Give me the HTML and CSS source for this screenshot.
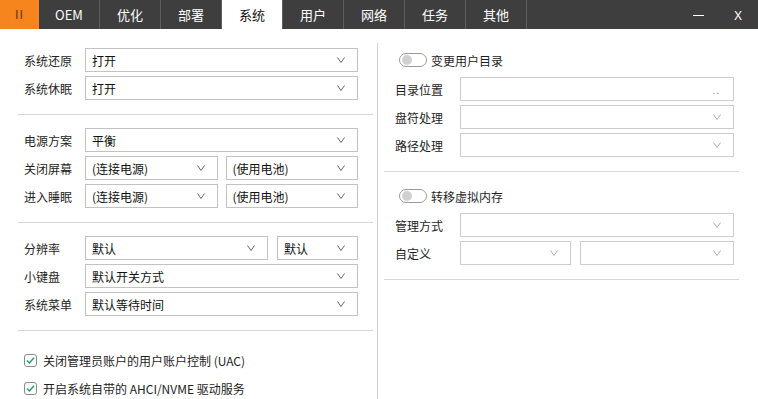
FILE: index.html
```html
<!DOCTYPE html>
<html lang="zh-CN">
<head>
    <meta charset="UTF-8">
    <title>系统</title>
    <link rel="stylesheet" href="styles.css">
</head>
<body>
    <!-- Top tab bar -->
    <div class="topbar">
        <div class="tab tab-logo">II</div>
        <div class="tab">OEM</div>
        <div class="tab">优化</div>
        <div class="tab">部署</div>
        <div class="tab active">系统</div>
        <div class="tab">用户</div>
        <div class="tab">网络</div>
        <div class="tab">任务</div>
        <div class="tab">其他</div>
        <div class="spacer"></div>
        <div class="win-btn"><span class="min-line"></span></div>
        <div class="win-btn">X</div>
    </div>

    <div class="main">
        <!-- Left column -->
        <div class="panel panel-left">
            <div class="section first">
                <div class="row">
                    <span class="label">系统还原</span>
                    <div class="select"><span>打开</span><svg class="chev" width="8" height="6" viewBox="0 0 8 6"><polyline points="0.5,0.5 4,5.5 7.5,0.5"/></svg></div>
                </div>
                <div class="row">
                    <span class="label">系统休眠</span>
                    <div class="select"><span>打开</span><svg class="chev" width="8" height="6" viewBox="0 0 8 6"><polyline points="0.5,0.5 4,5.5 7.5,0.5"/></svg></div>
                </div>
            </div>

            <div class="section">
                <div class="row">
                    <span class="label">电源方案</span>
                    <div class="select"><span>平衡</span><svg class="chev" width="8" height="6" viewBox="0 0 8 6"><polyline points="0.5,0.5 4,5.5 7.5,0.5"/></svg></div>
                </div>
                <div class="row">
                    <span class="label">关闭屏幕</span>
                    <div class="pair pair-power">
                        <div class="select"><span>(连接电源)</span><svg class="chev" width="8" height="6" viewBox="0 0 8 6"><polyline points="0.5,0.5 4,5.5 7.5,0.5"/></svg></div>
                        <div class="select"><span>(使用电池)</span><svg class="chev" width="8" height="6" viewBox="0 0 8 6"><polyline points="0.5,0.5 4,5.5 7.5,0.5"/></svg></div>
                    </div>
                </div>
                <div class="row">
                    <span class="label">进入睡眠</span>
                    <div class="pair pair-power">
                        <div class="select"><span>(连接电源)</span><svg class="chev" width="8" height="6" viewBox="0 0 8 6"><polyline points="0.5,0.5 4,5.5 7.5,0.5"/></svg></div>
                        <div class="select"><span>(使用电池)</span><svg class="chev" width="8" height="6" viewBox="0 0 8 6"><polyline points="0.5,0.5 4,5.5 7.5,0.5"/></svg></div>
                    </div>
                </div>
            </div>

            <div class="section">
                <div class="row">
                    <span class="label">分辨率</span>
                    <div class="pair pair-res">
                        <div class="select"><span>默认</span><svg class="chev" width="8" height="6" viewBox="0 0 8 6"><polyline points="0.5,0.5 4,5.5 7.5,0.5"/></svg></div>
                        <div class="select"><span>默认</span><svg class="chev" width="8" height="6" viewBox="0 0 8 6"><polyline points="0.5,0.5 4,5.5 7.5,0.5"/></svg></div>
                    </div>
                </div>
                <div class="row">
                    <span class="label">小键盘</span>
                    <div class="select"><span>默认开关方式</span><svg class="chev" width="8" height="6" viewBox="0 0 8 6"><polyline points="0.5,0.5 4,5.5 7.5,0.5"/></svg></div>
                </div>
                <div class="row">
                    <span class="label">系统菜单</span>
                    <div class="select"><span>默认等待时间</span><svg class="chev" width="8" height="6" viewBox="0 0 8 6"><polyline points="0.5,0.5 4,5.5 7.5,0.5"/></svg></div>
                </div>
            </div>

            <div class="section checks">
                <label class="check">
                    <svg class="checkbox" width="13" height="13" viewBox="0 0 13 13"><rect x="0.5" y="0.5" width="12" height="12" rx="2.5" class="cb-box"/><polyline points="3,6.6 5.4,9 10,3.8" class="cb-mark"/></svg>
                    <span>关闭管理员账户的用户账户控制 (UAC)</span>
                </label>
                <label class="check">
                    <svg class="checkbox" width="13" height="13" viewBox="0 0 13 13"><rect x="0.5" y="0.5" width="12" height="12" rx="2.5" class="cb-box"/><polyline points="3,6.6 5.4,9 10,3.8" class="cb-mark"/></svg>
                    <span>开启系统自带的 AHCI/NVME 驱动服务</span>
                </label>
            </div>
        </div>

        <div class="vrule"></div>

        <!-- Right column -->
        <div class="panel panel-right">
            <div class="section first">
                <div class="toggle-row">
                    <span class="toggle"><span class="knob"></span></span>
                    <span>变更用户目录</span>
                </div>
                <div class="row">
                    <span class="label">目录位置</span>
                    <div class="select disabled"><span></span><span class="dots">..</span></div>
                </div>
                <div class="row">
                    <span class="label">盘符处理</span>
                    <div class="select disabled"><span></span><svg class="chev" width="8" height="6" viewBox="0 0 8 6"><polyline points="0.5,0.5 4,5.5 7.5,0.5"/></svg></div>
                </div>
                <div class="row">
                    <span class="label">路径处理</span>
                    <div class="select disabled"><span></span><svg class="chev" width="8" height="6" viewBox="0 0 8 6"><polyline points="0.5,0.5 4,5.5 7.5,0.5"/></svg></div>
                </div>
            </div>

            <div class="section">
                <div class="toggle-row">
                    <span class="toggle"><span class="knob"></span></span>
                    <span>转移虚拟内存</span>
                </div>
                <div class="row">
                    <span class="label">管理方式</span>
                    <div class="select disabled"><span></span><svg class="chev" width="8" height="6" viewBox="0 0 8 6"><polyline points="0.5,0.5 4,5.5 7.5,0.5"/></svg></div>
                </div>
                <div class="row">
                    <span class="label">自定义</span>
                    <div class="pair pair-custom">
                        <div class="select disabled"><span></span><svg class="chev" width="8" height="6" viewBox="0 0 8 6"><polyline points="0.5,0.5 4,5.5 7.5,0.5"/></svg></div>
                        <div class="select disabled"><span></span><svg class="chev" width="8" height="6" viewBox="0 0 8 6"><polyline points="0.5,0.5 4,5.5 7.5,0.5"/></svg></div>
                    </div>
                </div>
            </div>
        </div>
    </div>
</body>
</html>
```

FILE: styles.css
```css
* {
    box-sizing: border-box;
}
body {
    margin: 0;
    background: #fff;
    font-family: "Noto Sans CJK SC", "Noto Sans", sans-serif;
    font-size: 12px;
    color: #1e1e1e;
    height: 399px;
    overflow: hidden;
}

/* Top bar */
.topbar {
    display: flex;
    height: 29px;
    background: #3e3e3e;
    color: #fff;
}
.tab {
    width: 61px;
    display: flex;
    align-items: center;
    justify-content: center;
    border-right: 1px solid #5e5e5e;
    font-size: 13px;
}
.tab-logo {
    width: 39px;
    background: #f7851d;
    color: #6e3506;
    border-right: none;
    font-family: "DejaVu Sans", sans-serif;
    font-size: 12px;
    letter-spacing: 1px;
}
.tab.active {
    background: #fff;
    color: #111;
}
.spacer {
    flex: 1;
}
.win-btn {
    width: 40px;
    display: flex;
    align-items: center;
    justify-content: center;
    font-size: 13px;
    font-family: "Noto Sans", sans-serif;
}
.min-line {
    width: 11px;
    height: 1px;
    background: #fff;
    margin-top: 2px;
}

/* Main area */
.main {
    display: flex;
    margin-top: 14px;
    height: 356px;
}
.panel {
    width: 355px;
}
.panel-left {
    margin-left: 18px;
}
.vrule {
    width: 1px;
    background: #d2d2d2;
    margin-left: 4px;
    margin-right: 6px;
}
.section {
    padding-top: 13px;
    padding-bottom: 14px;
    border-bottom: 1px solid #d6d6d6;
    display: flex;
    flex-direction: column;
    gap: 4px;
}
.section.first {
    padding-top: 5px;
}
.panel-left .section {
    padding-left: 6px;
    padding-right: 15px;
}
.panel-right .section {
    padding-left: 11px;
    padding-right: 5px;
}
.row {
    display: flex;
    align-items: center;
    height: 24px;
}
.panel-left .label {
    width: 61px;
}
.panel-right .label {
    width: 65px;
}
.select {
    flex: 1;
    height: 24px;
    border: 1px solid #c3c3c3;
    display: flex;
    align-items: center;
    justify-content: space-between;
    padding: 0 12px 0 6px;
    color: #111;
}
.chev {
    fill: none;
    stroke: #666;
    stroke-width: 1;
}
.select.disabled {
    border-color: #cdcdcd;
}
.select.disabled .chev {
    stroke: #aaa;
}
.dots {
    color: #888;
    font-size: 10px;
    letter-spacing: 1px;
    margin-right: 1px;
}
.pair {
    flex: 1;
    display: flex;
}
.pair-power {
    gap: 8px;
}
.pair-power .select {
    flex: 1;
}
.pair-res {
    gap: 9px;
}
.pair-res .select:first-child {
    flex: none;
    width: 183px;
}
.pair-custom {
    gap: 9px;
}
.pair-custom .select:first-child {
    flex: none;
    width: 111px;
}

/* Checkboxes */
.section.checks {
    border-bottom: none;
    padding-top: 17px;
    gap: 4px;
}
.check {
    display: flex;
    align-items: center;
    height: 24px;
    gap: 6px;
}
.cb-box {
    fill: #fff;
    stroke: #8a8a8a;
    stroke-width: 1;
}
.cb-mark {
    fill: none;
    stroke: #1aa260;
    stroke-width: 1.4;
}

/* Toggles */
.toggle-row {
    display: flex;
    align-items: center;
    height: 24px;
    gap: 4px;
    margin-bottom: 1px;
    padding-left: 4px;
}
.toggle {
    width: 28px;
    height: 14px;
    border: 1px solid #9a9a9a;
    border-radius: 7px;
    display: flex;
    align-items: center;
    padding-left: 2px;
}
.knob {
    width: 10px;
    height: 10px;
    border-radius: 50%;
    background: #d0d0d0;
}
.panel-right .section:not(.first) {
    padding-top: 12px;
}
```
